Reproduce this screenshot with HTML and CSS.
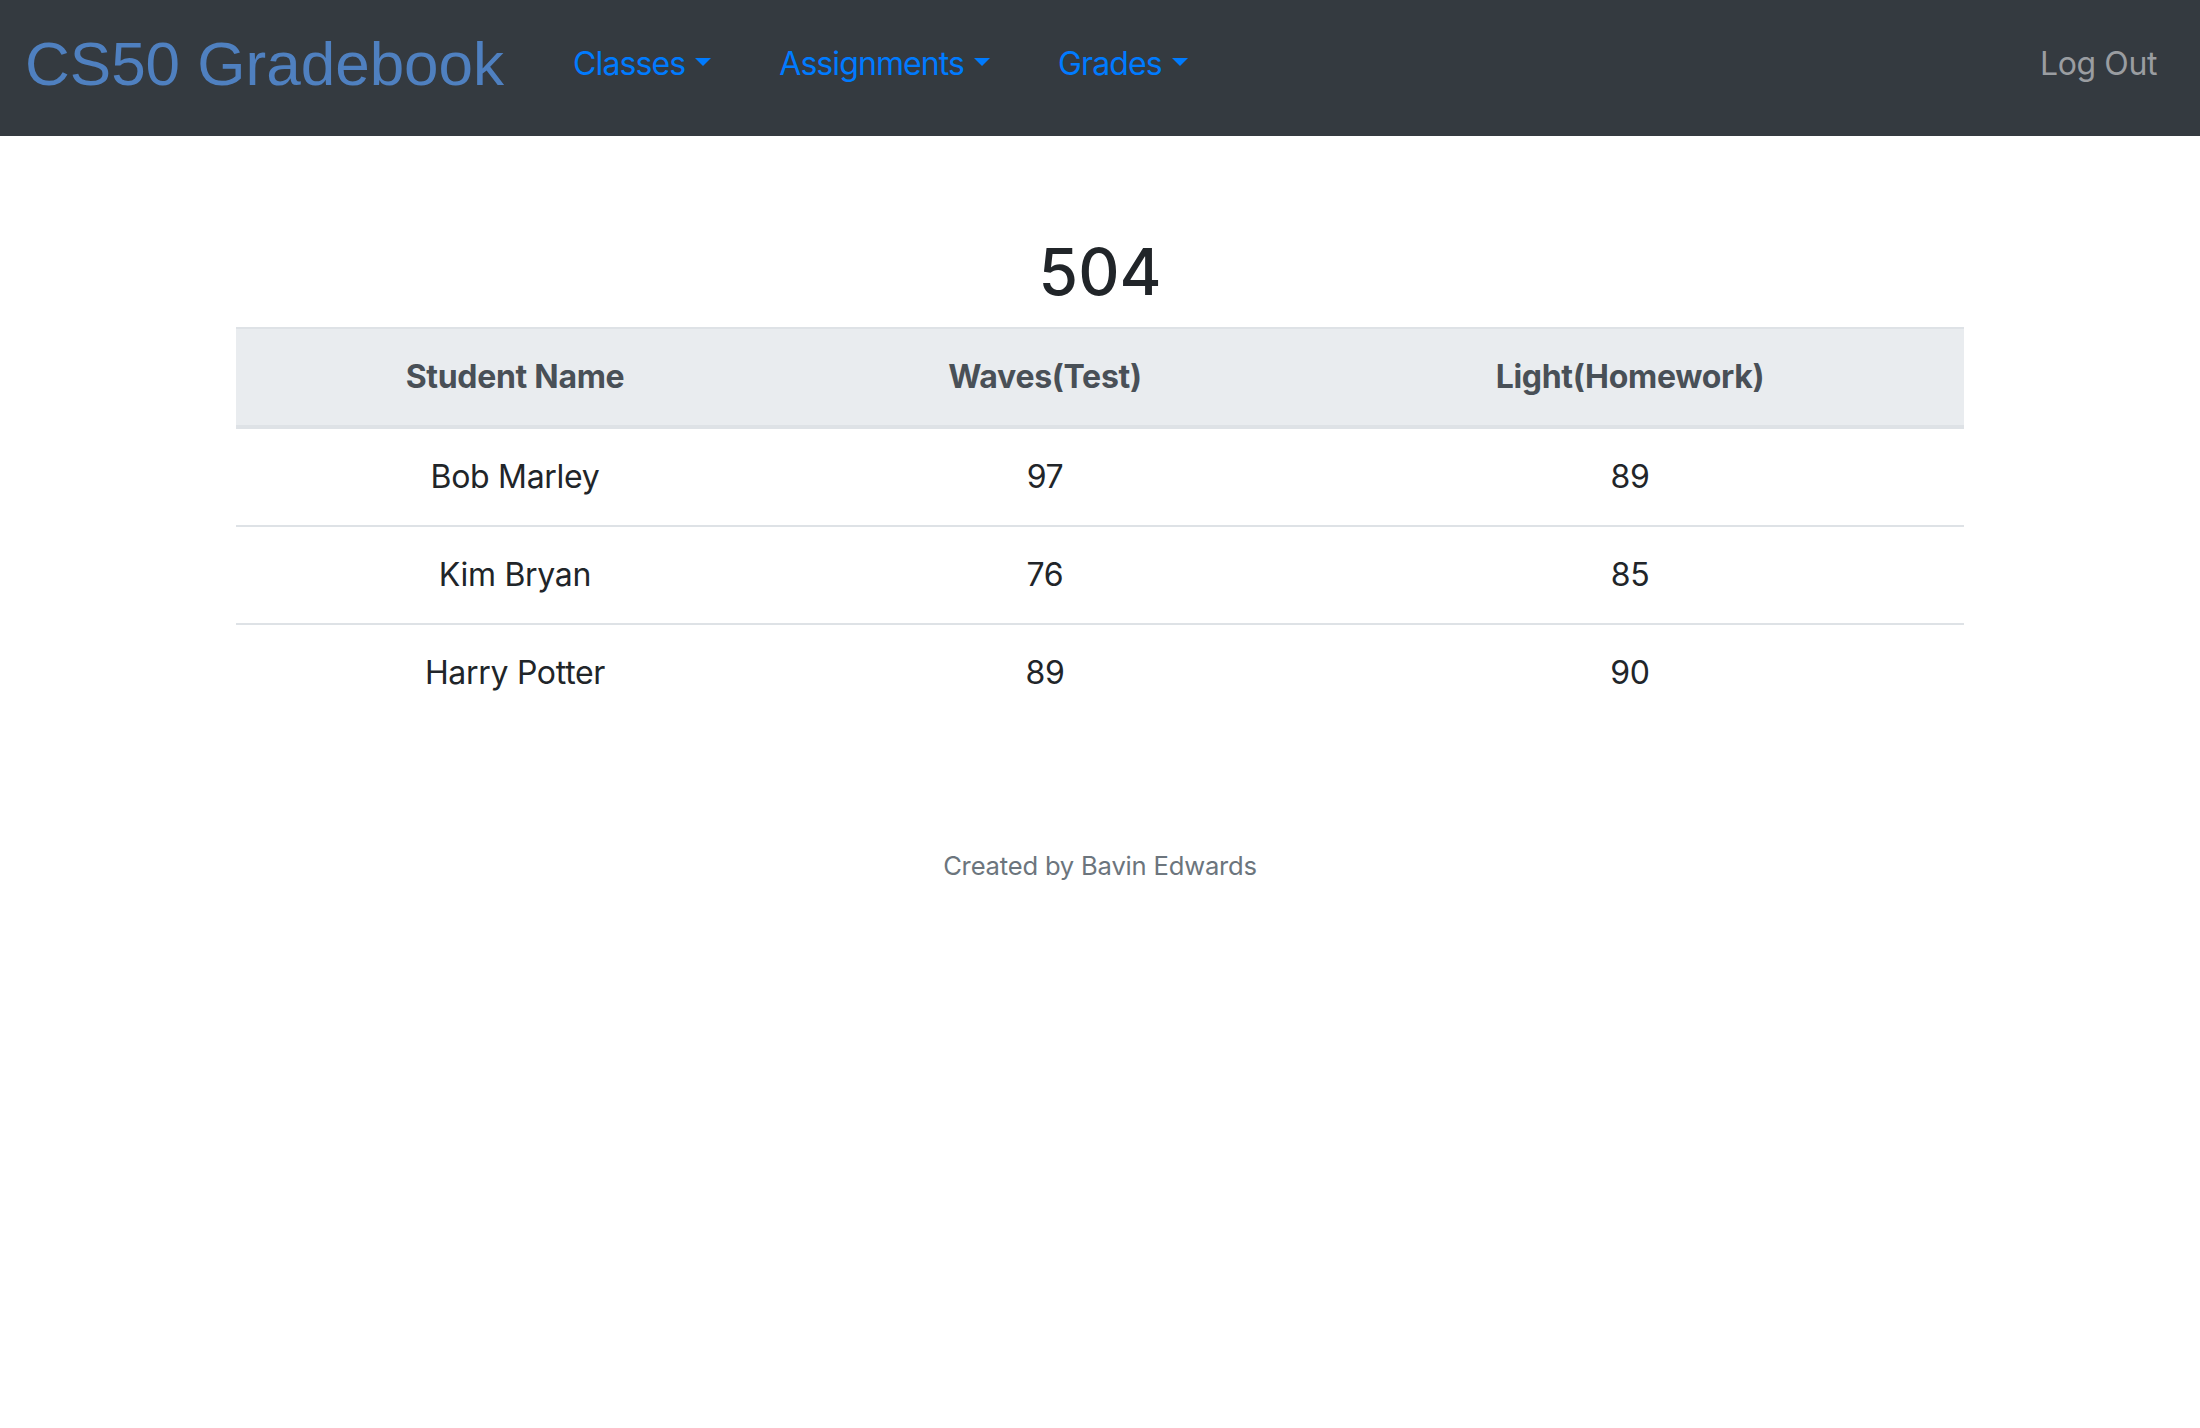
FILE: index.html
```html
<!DOCTYPE html>
<html lang="en">
<head>
<meta charset="utf-8">
<title>CS50 Gradebook</title>
<link rel="stylesheet" href="styles.css">
</head>
<body>
<nav class="navbar">
  <a class="brand" href="#">CS50 Gradebook</a>
  <ul class="nav">
    <li><a class="nav-link" href="#">Classes<span class="caret"></span></a></li>
    <li><a class="nav-link" href="#">Assignments<span class="caret"></span></a></li>
    <li><a class="nav-link" href="#">Grades<span class="caret"></span></a></li>
  </ul>
  <a class="logout" href="#">Log Out</a>
</nav>
<main class="container">
  <h2 class="title">504</h2>
  <table class="grades">
    <colgroup>
      <col class="col-name">
      <col class="col-test">
      <col class="col-hw">
    </colgroup>
    <thead>
      <tr><th>Student Name</th><th>Waves(Test)</th><th>Light(Homework)</th></tr>
    </thead>
    <tbody>
      <tr><td>Bob Marley</td><td>97</td><td>89</td></tr>
      <tr><td>Kim Bryan</td><td>76</td><td>85</td></tr>
      <tr><td>Harry Potter</td><td>89</td><td>90</td></tr>
    </tbody>
  </table>
  <footer class="footer">Created by Bavin Edwards</footer>
</main>
</body>
</html>
```
FILE: styles.css
```css
* { box-sizing: border-box; }
html, body { margin: 0; padding: 0; background: #fff; }
body {
  font-family: Inter, "Noto Sans", "Liberation Sans", sans-serif;
  color: #212529;
  font-size: 32px;
  line-height: 1.5;
}
a { text-decoration: none; }

.navbar {
  display: flex;
  align-items: center;
  height: 136px;
  padding: 0 43px 9px 25px;
  background: #343a40;
}
.brand {
  font-family: "Liberation Sans", Arial, sans-serif;
  font-size: 62px;
  line-height: 1;
  color: #4f80c0;
  margin-right: 35px;
}
.nav {
  display: flex;
  list-style: none;
  margin: 0;
  padding: 0;
  flex: 1;
}
.nav-link {
  display: inline-flex;
  align-items: center;
  padding: 0 34px;
  color: #007bff;
  font-size: 32px;
  letter-spacing: -0.9px;
  line-height: 48px;
}
.caret {
  display: inline-block;
  margin-left: 10px;
  margin-top: -4px;
  width: 0;
  height: 0;
  border-top: 8px solid #007bff;
  border-left: 8px solid transparent;
  border-right: 8px solid transparent;
}
.logout {
  color: #9a9da1;
  font-size: 32px;
  letter-spacing: -0.4px;
  line-height: 48px;
}

.container {
  width: 1728px;
  margin: 0 auto;
  padding-top: 98px;
}
.title {
  margin: 0 0 16px;
  text-align: center;
  font-size: 64px;
  font-weight: 500;
  line-height: 1.2;
  color: #212529;
}
.grades {
  width: 100%;
  border-collapse: collapse;
  text-align: center;
}
.col-name { width: 558px; }
.col-test { width: 502px; }
.col-hw { width: 668px; }
.grades th {
  padding: 24px;
  background: #e9ecef;
  color: #495057;
  font-weight: 700;
  letter-spacing: -0.3px;
  border-top: 2px solid #dee2e6;
  border-bottom: 4px solid #dee2e6;
}
.grades td {
  padding: 24px;
  border-top: 2px solid #dee2e6;
  letter-spacing: -0.3px;
}
.footer {
  margin-top: 126px;
  text-align: center;
  font-size: 25.6px;
  color: #6c757d;
  letter-spacing: -0.2px;
}
```
